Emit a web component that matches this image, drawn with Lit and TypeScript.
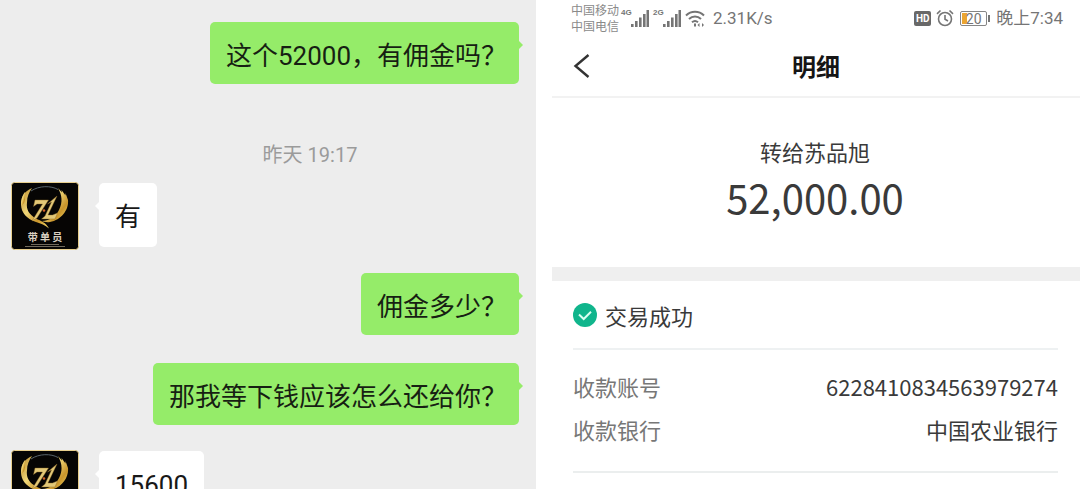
import { LitElement, html, svg, css } from "lit";
import { customElement, property } from "lit/decorators.js";

const CJK = css`"Noto Sans CJK SC", "Noto Sans", sans-serif`;

@customElement("group-avatar")
class GroupAvatar extends LitElement {
  static styles = css`
    :host { display: block; flex: none; width: 68px; height: 68px; }
    .art { display: block; width: 100%; height: 100%; }
    .name { font: 700 10px ${CJK}; fill: #d9cfc0; }
  `;
  render() {
    return html`
      <svg class="art" viewBox="0 0 68 68" role="img" aria-label="带单员">
        <defs>
          <linearGradient id="gold" x1="0" y1="0" x2="1" y2="1">
            <stop offset="0" stop-color="#b98a2c" />
            <stop offset=".4" stop-color="#f0d678" />
            <stop offset=".7" stop-color="#c9952b" />
            <stop offset="1" stop-color="#f5dc6c" />
          </linearGradient>
        </defs>
        <rect x=".5" y=".5" width="67" height="67" rx="3" fill="#060504" stroke="#e8cf8e" />
        <g fill="url(#gold)">
          <path d="M21 6C14 9 10 14 10 22c0 9 6 15 15 18 5 1.500 9 3 13 6.500-3-6-8-7.500-13-10-7-4-10-9-9-16 0-6 2-10 5-14.500z" />
          <path d="M14 10c-3 4-4.500 9-3.500 14L14 20z" />
          <path d="M47 6l4 4.500L50.500 8l4 5.500 0-2.500 2.500 7C58 28 50 38 39 40c-3 .5-6 0-8-1 8-.5 14-5 17-11 4-8 3-15-1-22z" />
        </g>
        <g fill="#e2c878" stroke="#8b6420" stroke-width=".4">
          <path d="M24 18h13.500L26 36l-5 3 10.500-17H26l-3.500 2.500z" />
          <path d="M46 14L37 33h4.500l5-2-2.500 6H30.500l3.500-3 6.500-14-4 2z" />
        </g>
        <path d="M20 9C28 3.500 40 3.500 47 7.500" fill="none" stroke="#59646b" stroke-width="1" />
        <circle cx="33" cy="28.500" r="1.300" fill="#d2622c" />
        <text class="name" x="34" y="59" text-anchor="middle">带 单 员</text>
        <path d="M20 62.500h28M14 64.500h40" stroke="#8d8474" stroke-width=".8" />
      </svg>
    `;
  }
}

@customElement("chat-bubble")
class ChatBubble extends LitElement {
  @property({ reflect: true }) from = "me";
  static styles = css`
    :host {
      display: block; position: relative; box-sizing: border-box;
      padding: 15px 12px 9px 16px; border-radius: 5px;
      background: #95ec69; color: #171f13;
      font: 26px/38px Roboto, ${CJK}; white-space: nowrap;
    }
    :host([from="them"]) { background: #fff; color: #181818; padding: 15px 16px 11px; }
    .tail {
      position: absolute; top: 18px; right: -4px; width: 5px; height: 10px;
      background: inherit; clip-path: polygon(0 0, 100% 50%, 0 100%);
    }
    :host([from="them"]) .tail {
      right: auto; left: -4px; clip-path: polygon(100% 0, 0 50%, 100% 100%);
    }
  `;
  render() {
    return html`<span class="tail"></span><slot></slot>`;
  }
}

interface Message { from: "me" | "them"; text: string; }

const before: Message[] = [{ from: "me", text: "这个52000，有佣金吗？" }];
const after: Message[] = [
  { from: "them", text: "有" },
  { from: "me", text: "佣金多少？" },
  { from: "me", text: "那我等下钱应该怎么还给你？" },
  { from: "them", text: "15600" },
];

@customElement("chat-pane")
class ChatPane extends LitElement {
  static styles = css`
    :host { display: block; background: #ededed; overflow: hidden; padding: 22px 17px 0 11px; }
    .row { display: flex; }
    .row.me { justify-content: flex-end; }
    .row.them { gap: 20px; }
    .them + .me { margin-top: 23px; }
    .me + .me { margin-top: 28px; }
    .me + .them { margin-top: 25px; }
    .bubble { align-self: flex-start; }
    .them .bubble { margin-top: 1px; }
    .time {
      display: block; padding: 59px 0 15px 90px; text-align: center;
      font: 20px/24px Roboto, ${CJK}; color: #9b9b9b;
    }
  `;
  row(m: Message) {
    return html`
      <div class="row ${m.from}">
        ${m.from === "them" ? html`<group-avatar></group-avatar>` : ""}
        <chat-bubble class="bubble" from=${m.from}>${m.text}</chat-bubble>
      </div>
    `;
  }
  render() {
    return html`
      ${before.map((m) => this.row(m))}
      <time class="time">昨天 19:17</time>
      ${after.map((m) => this.row(m))}
    `;
  }
}

const signal = svg`
  <path d="M0 14h2.600v3H0zM4 11h2.600v6H4zM8 7.500h2.600V17H8zM12 4h2.600v13H12zM15.500 0h2.600v17h-2.600z" />
`;

@customElement("status-bar")
class StatusBar extends LitElement {
  static styles = css`
    :host {
      display: flex; align-items: center; justify-content: space-between;
      height: 36px; padding: 0 17px 0 21px; color: #757575;
      font: 17px/20px Roboto, ${CJK};
    }
    .side { display: flex; align-items: center; }
    .carriers { font: 12px/16px ${CJK}; color: #8a8a8a; margin-right: 2px; }
    .carrier { display: block; }
    .net { align-self: flex-start; font: 700 8px/10px "Liberation Sans", sans-serif; margin-top: 6px; width: 10px; }
    .signal { width: 18px; height: 17px; fill: currentColor; margin-right: 4px; }
    .wifi { width: 20px; height: 17px; margin-right: 8px; }
    .hd {
      font: 700 10px/15px Roboto, sans-serif; color: #fff; background: #686868;
      border-radius: 2px; width: 17px; text-align: center; margin-right: 5px;
    }
    .alarm { width: 18px; height: 18px; margin-right: 6px; }
    .battery {
      position: relative; box-sizing: border-box; width: 27px; height: 15px; margin-right: 9px;
      border: 1px solid #858585; border-radius: 2px; text-align: center;
      font: 14px/13px Roboto, sans-serif;
      background: linear-gradient(to right, #eba531 5px, transparent 5px) content-box;
      padding: 1px;
    }
    .level { display: block; line-height: 12px; }
    .battery::after {
      content: ""; position: absolute; right: -4px; top: 3px; width: 2px; height: 7px; background: #757575;
    }
  `;
  render() {
    return html`
      <div class="side">
        <div class="carriers">
          <span class="carrier">中国移动</span><span class="carrier">中国电信</span>
        </div>
        <span class="net">4G</span>
        <svg class="signal" viewBox="0 0 18 17">${signal}</svg>
        <span class="net">2G</span>
        <svg class="signal" viewBox="0 0 18 17">${signal}</svg>
        <svg class="wifi" viewBox="0 0 20 17" fill="none" stroke="currentColor" stroke-width="2">
          <path d="M1 5.500C6 .5 14 .5 19 5.500M4 9c3.500-3.500 8.500-3.500 12 0M7 12.200c2-1.700 4-1.700 6 0" />
          <path d="M10 13.500v3" />
          <path d="M12.500 15l2-2v4zM19 15l-2-2v4z" fill="currentColor" stroke="none" />
        </svg>
        <span>2.31K/s</span>
      </div>
      <div class="side">
        <span class="hd">HD</span>
        <svg class="alarm" viewBox="0 0 18 18" fill="none" stroke="currentColor" stroke-width="1.600">
          <circle cx="9" cy="10" r="6.500" />
          <path d="M9 6v4.300l3 1.700M1 4.800L4.500 1.500M17 4.800L13.500 1.500" />
        </svg>
        <span class="battery"><span class="level">20</span></span>
        <span>晚上7:34</span>
      </div>
    `;
  }
}

@customElement("transfer-pane")
class TransferPane extends LitElement {
  static styles = css`
    :host { display: block; background: #fff; color: #3a3a3a; font: 22px/32px ${CJK}; overflow: hidden; padding-left: 14px; }
    .header {
      display: grid; grid-template-columns: 60px 1fr 60px; align-items: center;
      height: 62px; border-bottom: 2px solid #f2f2f2; margin-left: 2px; box-sizing: border-box;
    }
    .back { border: 0; background: none; padding: 0 0 0 20px; height: 40px; color: #333; cursor: pointer; text-align: left; }
    .chevron { display: block; width: 20px; height: 26px; }
    .title { margin: 0; font: 700 24px/36px ${CJK}; color: #151515; text-align: center; }
    .summary { text-align: center; padding: 36px 0 42px; }
    .payee { margin: 0; line-height: 35px; }
    .amount { margin: 0; font-size: 40px; line-height: 56px; }
    .details { border-top: 14px solid #efefef; margin-left: 2px; padding: 0 22px 0 21px; }
    .state { display: flex; align-items: center; gap: 8px; margin: 0; height: 67px; border-bottom: 2px solid #eef1f2; }
    .tick { width: 24px; height: 24px; }
    .list { margin: 0; padding: 20px 0 26px; display: grid; gap: 11px; border-bottom: 2px solid #ebeeee; }
    .item { display: flex; justify-content: space-between; }
    .label { color: #777; }
    .value { margin: 0; }
  `;
  render() {
    return html`
      <status-bar></status-bar>
      <header class="header">
        <button class="back" aria-label="返回">
          <svg class="chevron" viewBox="0 0 20 26" fill="none" stroke="currentColor" stroke-width="2.400">
            <path d="M16.500 2L3.500 13l13 11" />
          </svg>
        </button>
        <h1 class="title">明细</h1>
      </header>
      <section class="summary">
        <p class="payee">转给苏品旭</p>
        <p class="amount">52,000.00</p>
      </section>
      <section class="details">
        <p class="state">
          <svg class="tick" viewBox="0 0 24 24">
            <circle cx="12" cy="12" r="12" fill="#10b58c" />
            <path d="M6 11.500l4.700 4.500L18 8.800" fill="none" stroke="#d9fff2" stroke-width="2" />
          </svg>
          交易成功
        </p>
        <dl class="list">
          <div class="item"><dt class="label">收款账号</dt><dd class="value">6228410834563979274</dd></div>
          <div class="item"><dt class="label">收款银行</dt><dd class="value">中国农业银行</dd></div>
        </dl>
      </section>
    `;
  }
}

@customElement("app-root")
class AppRoot extends LitElement {
  static styles = css`
    :host {
      display: grid; grid-template-columns: minmax(0, 536fr) minmax(0, 544fr);
      height: 100vh; overflow: hidden; background: #fff;
    }
  `;
  render() {
    return html`<chat-pane></chat-pane><transfer-pane></transfer-pane>`;
  }
}
